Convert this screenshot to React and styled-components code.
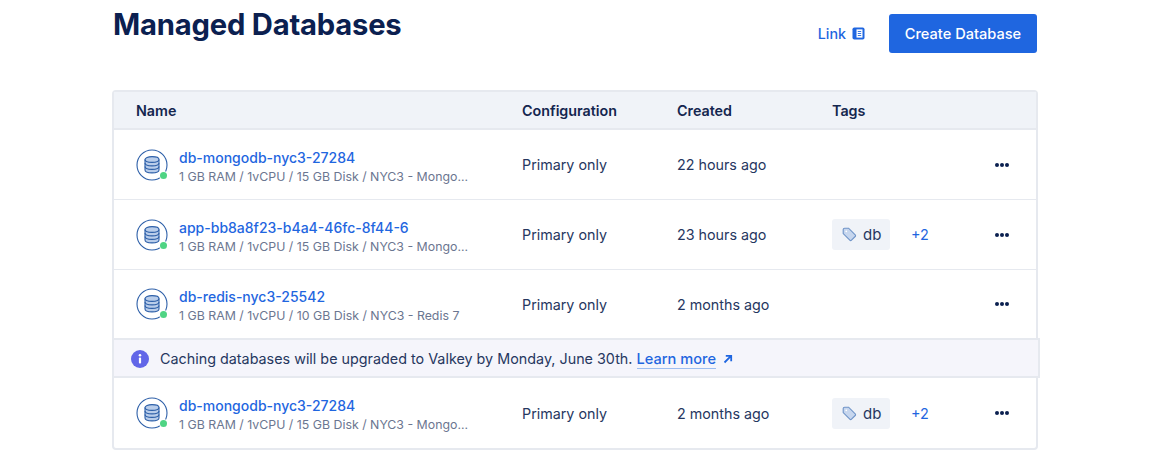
import React from "react";
import styled, { createGlobalStyle } from "styled-components";

const GlobalStyle = createGlobalStyle`
  html, body {
    margin: 0;
    background: #fff;
    font-family: "Inter", "Liberation Sans", sans-serif;
    color: #0b2050;
    overflow: hidden;
  }
`;

const dbs = [
  { name: "db-mongodb-nyc3-27284", info: "1 GB RAM / 1vCPU / 15 GB Disk / NYC3 - Mongo...", created: "22 hours ago" },
  { name: "app-bb8a8f23-b4a4-46fc-8f44-6", info: "1 GB RAM / 1vCPU / 15 GB Disk / NYC3 - Mongo...", created: "23 hours ago", tagged: true },
  { name: "db-redis-nyc3-25542", info: "1 GB RAM / 1vCPU / 10 GB Disk / NYC3 - Redis 7", created: "2 months ago" },
];

const last = { name: "db-mongodb-nyc3-27284", info: "1 GB RAM / 1vCPU / 15 GB Disk / NYC3 - Mongo...", created: "2 months ago", tagged: true };

function DbIcon() {
  return (
    <IconWrap>
      <svg width="32" height="32" viewBox="0 0 32 32" fill="none">
        <circle cx="16" cy="16" r="15" stroke="#2d5fa8" strokeWidth="1.1" />
        <path d="M9 10.500c0-1.700 3.100-2.900 7-2.900s7 1.200 7 2.900v10.500c0 1.700-3.100 2.900-7 2.900s-7-1.200-7-2.900z" fill="#b9cdea" stroke="#2d5fa8" strokeWidth="1.100" />
        <path d="M9 10.500c0 1.700 3.100 2.900 7 2.900s7-1.200 7-2.900M9 14c0 1.700 3.100 2.900 7 2.900s7-1.200 7-2.900M9 17.500c0 1.700 3.100 2.900 7 2.900s7-1.200 7-2.900" stroke="#2d5fa8" strokeWidth="1.100" />
      </svg>
      <StatusDot />
    </IconWrap>
  );
}

function Row({ db }) {
  return (
    <>
      <NameCell>
        <DbIcon />
        <NameText>
          <DbName>{db.name}</DbName>
          <DbInfo>{db.info}</DbInfo>
        </NameText>
      </NameCell>
      <Cell>Primary only</Cell>
      <Cell>{db.created}</Cell>
      <Cell>
        {db.tagged && (
          <>
            <Tag>
              <svg width="15" height="15" viewBox="0 0 15 15" fill="none">
                <path d="M1.200 2.600c0-.8.6-1.400 1.400-1.400h4l6.600 6.600c.5.5.5 1.200 0 1.700l-3.700 3.700c-.5.5-1.200.5-1.700 0L1.200 6.600z" fill="#c6d6ee" stroke="#6f94c8" strokeWidth="1.100" />
                <circle cx="4.300" cy="4.300" r="0.900" fill="#fff" />
              </svg>
              db
            </Tag>
            <More>+2</More>
          </>
        )}
      </Cell>
      <MenuCell>
        <Dots>
          <i />
          <i />
          <i />
        </Dots>
      </MenuCell>
    </>
  );
}

export default function App() {
  return (
    <Page>
      <GlobalStyle />
      <Header>
        <Title>Managed Databases</Title>
        <Actions>
          <DocLink href="#">
            Link
            <svg width="13" height="13" viewBox="0 0 13 13">
              <rect x="0.500" y="0.500" width="12" height="12" rx="1.800" fill="#1f66e0" />
              <rect x="4.500" y="2.400" width="6" height="8.200" fill="#fff" />
              <path d="M5.800 4.500h3.400M5.800 6.500h3.400M5.800 8.500h3.400" stroke="#1f66e0" strokeWidth="0.900" />
            </svg>
          </DocLink>
          <CreateButton>Create Database</CreateButton>
        </Actions>
      </Header>
      <Table>
        <HeadRow>
          <HeadCell>Name</HeadCell>
          <HeadCell>Configuration</HeadCell>
          <HeadCell>Created</HeadCell>
          <HeadCell>Tags</HeadCell>
        </HeadRow>
        {dbs.map((db) => (
          <DbRow key={db.name}>
            <Row db={db} />
          </DbRow>
        ))}
        <Banner>
          <svg width="18" height="18" viewBox="0 0 18 18">
            <circle cx="9" cy="9" r="9" fill="#6266e8" />
            <circle cx="9" cy="5.200" r="1.300" fill="#fff" />
            <rect x="7.900" y="7.600" width="2.200" height="6" rx="0.800" fill="#fff" />
          </svg>
          <BannerText>
            Caching databases will be upgraded to Valkey by Monday, June 30th.{" "}
            <LearnMore href="#">Learn more</LearnMore>
          </BannerText>
          <svg width="10" height="10" viewBox="0 0 10 10" fill="none">
            <path d="M1.500 8.500 7.800 2.200M2.800 1.800h5.400v5.400" stroke="#1f66e0" strokeWidth="1.800" />
          </svg>
        </Banner>
        <LastRow>
          <Row db={last} />
        </LastRow>
      </Table>
    </Page>
  );
}

const Page = styled.div`
  width: 1150px;
  height: 456px;
  box-sizing: border-box;
  padding: 0 112px;
  overflow: hidden;
`;

const Header = styled.header`
  height: 90px;
  box-sizing: border-box;
  padding: 8px 1px 0 1px;
  display: flex;
  justify-content: space-between;
  align-items: flex-start;
`;

const Title = styled.h1`
  margin: 0;
  font-size: 29.200px;
  line-height: 34px;
  font-weight: 700;
  letter-spacing: -0.200px;
  color: #0b2050;
`;

const Actions = styled.div`
  display: flex;
  align-items: center;
  gap: 24px;
  padding-top: 6px;
`;

const DocLink = styled.a`
  display: flex;
  align-items: center;
  gap: 6px;
  font-size: 14.300px;
  font-weight: 500;
  color: #1f66e0;
  text-decoration: none;
`;

const CreateButton = styled.button`
  width: 148px;
  height: 39px;
  border: 0;
  border-radius: 3px;
  background: #1f66e0;
  color: #fff;
  font: 500 14.600px "Inter", "Liberation Sans", sans-serif;
`;

const Table = styled.div`
  width: 926px;
  box-sizing: border-box;
  border: 2px solid #e6e9ef;
  border-radius: 4px;
`;

const columns = `grid-template-columns: 386px 155px 155px 140px 1fr;`;

const HeadRow = styled.div`
  display: grid;
  ${columns}
  align-items: center;
  height: 36px;
  padding-left: 22px;
  background: #f0f3f8;
  border-bottom: 2px solid #e6e9ef;
`;

const HeadCell = styled.div`
  font-size: 14.300px;
  font-weight: 600;
  color: #14264f;
`;

const DbRow = styled.div`
  display: grid;
  ${columns}
  align-items: center;
  height: 69px;
  padding-left: 22px;
  border-bottom: 1px solid #e6e9ef;
  &:nth-of-type(4) {
    height: 68px;
    border-bottom: 0;
  }
`;

const LastRow = styled(DbRow)`
  height: 70px;
  border-bottom: 0;
`;

const NameCell = styled.div`
  display: flex;
  align-items: center;
  gap: 11px;
`;

const IconWrap = styled.div`
  position: relative;
  width: 32px;
  height: 32px;
  flex: none;
`;

const StatusDot = styled.span`
  position: absolute;
  right: 1px;
  bottom: 2px;
  width: 7px;
  height: 7px;
  border-radius: 50%;
  background: #4fd484;
  box-shadow: 0 0 0 1px #fff;
`;

const NameText = styled.div`
  display: flex;
  flex-direction: column;
  gap: 2px;
  padding-top: 3px;
`;

const DbName = styled.a`
  font-size: 14px;
  line-height: 18px;
  font-weight: 500;
  color: #1f66e0;
`;

const DbInfo = styled.div`
  font-size: 12.350px;
  line-height: 15px;
  color: #6b7690;
`;

const Cell = styled.div`
  display: flex;
  align-items: center;
  font-size: 14.300px;
  color: #26375f;
`;

const Tag = styled.span`
  display: inline-flex;
  align-items: center;
  gap: 6px;
  width: 58px;
  height: 31px;
  box-sizing: border-box;
  padding-left: 10px;
  border-radius: 3px;
  background: #f0f3f8;
  font-size: 15px;
`;

const More = styled.span`
  margin-left: 21px;
  font-size: 14.400px;
  color: #1f66e0;
`;

const MenuCell = styled.div`
  display: flex;
  padding-left: 23px;
`;

const Dots = styled.span`
  display: inline-flex;
  gap: 1px;
  i {
    width: 4px;
    height: 4px;
    border-radius: 50%;
    background: #0b2050;
  }
`;

const Banner = styled.div`
  display: flex;
  align-items: center;
  gap: 11px;
  width: 928px;
  height: 40px;
  box-sizing: border-box;
  margin: 0 -2px;
  padding: 1px 0 0 17px;
  background: #f5f5fb;
  border: 2px solid #e6e9ef;
  font-size: 14.350px;
  color: #26375f;
`;

const BannerText = styled.span`
  margin-right: -4px;
`;

const LearnMore = styled.a`
  color: #1f66e0;
  font-weight: 500;
  font-size: 14.600px;
  text-decoration: none;
  border-bottom: 1px solid #9dbdf0;
`;
